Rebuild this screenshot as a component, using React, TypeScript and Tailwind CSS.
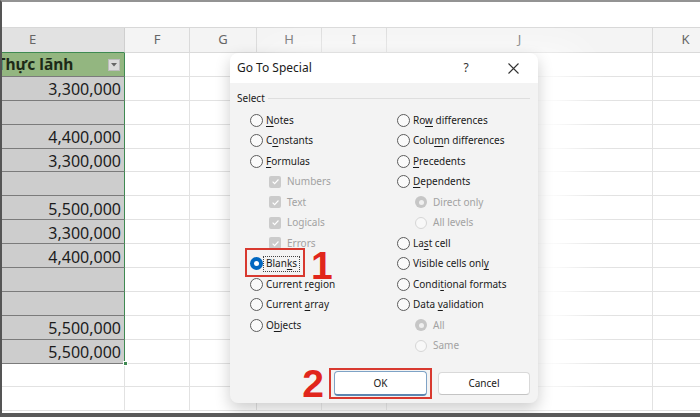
import React from "react";

const values = [
  "3,300,000",
  "",
  "4,400,000",
  "3,300,000",
  "",
  "5,500,000",
  "3,300,000",
  "4,400,000",
  "",
  "",
  "5,500,000",
  "5,500,000",
];

// widths of F..K
const restWidthClass = ["w-[65px]", "w-[67px]", "w-[65px]", "w-[65px]", "w-[266px]", "w-[66px]"];
const letters = ["F", "G", "H", "I", "J", "K"];

type Kind = "radio" | "checked" | "check" | "sub" | "subChecked";
type Item = { kind: Kind; label: string; u?: number; mark?: boolean };

const leftItems: Item[] = [
  { kind: "radio", label: "Notes", u: 0 },
  { kind: "radio", label: "Constants", u: 1 },
  { kind: "radio", label: "Formulas", u: 0 },
  { kind: "check", label: "Numbers" },
  { kind: "check", label: "Text" },
  { kind: "check", label: "Logicals" },
  { kind: "check", label: "Errors" },
  { kind: "checked", label: "Blanks", u: 4, mark: true },
  { kind: "radio", label: "Current region", u: 8 },
  { kind: "radio", label: "Current array", u: 8 },
  { kind: "radio", label: "Objects", u: 1 },
];

const rightItems: Item[] = [
  { kind: "radio", label: "Row differences", u: 2 },
  { kind: "radio", label: "Column differences", u: 4 },
  { kind: "radio", label: "Precedents", u: 0 },
  { kind: "radio", label: "Dependents", u: 0 },
  { kind: "subChecked", label: "Direct only" },
  { kind: "sub", label: "All levels" },
  { kind: "radio", label: "Last cell", u: 2 },
  { kind: "radio", label: "Visible cells only", u: 17 },
  { kind: "radio", label: "Conditional formats", u: 5 },
  { kind: "radio", label: "Data validation", u: 5 },
  { kind: "subChecked", label: "All" },
  { kind: "sub", label: "Same" },
];

function Label({ text, u }: { text: string; u?: number }) {
  if (u === undefined) return <>{text}</>;
  return (
    <>
      {text.slice(0, u)}
      <span className="underline underline-offset-[2px]">{text[u]}</span>
      {text.slice(u + 1)}
    </>
  );
}

function Mark({ kind }: { kind: Kind }) {
  if (kind === "radio")
    return <span className="w-[13px] h-[13px] shrink-0 rounded-full border border-[#5c5c5c] bg-[#fafafa]" />;
  if (kind === "checked")
    return (
      <span className="w-[13px] h-[13px] shrink-0 rounded-full bg-[#0067c0] flex items-center justify-center">
        <span className="w-[5px] h-[5px] rounded-full bg-white" />
      </span>
    );
  if (kind === "subChecked")
    return (
      <span className="w-[12px] h-[12px] shrink-0 rounded-full bg-[#c6c6c6] flex items-center justify-center">
        <span className="w-[5px] h-[5px] rounded-full bg-[#efefef]" />
      </span>
    );
  if (kind === "sub")
    return <span className="w-[12px] h-[12px] shrink-0 rounded-full border border-[#d6d6d6] bg-[#f8f8f8]" />;
  return (
    <span className="w-[12px] h-[12px] shrink-0 rounded-[2px] bg-[#cbcbcb] flex items-center justify-center">
      <svg width="9" height="9" viewBox="0 0 10 10">
        <path d="M1.8 5.2 L4 7.3 L8.3 2.8" fill="none" stroke="white" strokeWidth="1.3" />
      </svg>
    </span>
  );
}

function Option({ item }: { item: Item }) {
  const disabled = item.kind === "check" || item.kind === "sub" || item.kind === "subChecked";
  const indent = item.kind === "check" ? "pl-[19px]" : item.kind === "sub" || item.kind === "subChecked" ? "pl-[18px]" : "";
  const gap = disabled ? "ml-[6px]" : "ml-[3px]";
  return (
    <div className={`relative h-[20.5px] flex items-center ${indent}`}>
      <Mark kind={item.kind} />
      {item.mark ? (
        <span className="h-[16px] flex items-center border border-dotted border-[#444] px-[2px] text-[#1a1a1a]">
          <Label text={item.label} u={item.u} />
        </span>
      ) : (
        <span className={`${gap} whitespace-nowrap ${disabled ? "text-[#a2a2a2]" : "text-[#1a1a1a]"}`}>
          <Label text={item.label} u={item.u} />
        </span>
      )}
      {item.mark && (
        <>
          <span className="absolute left-[-5px] top-[-5px] w-[60px] h-[29px] border-2 border-[#d8392f]" />
          <span className="absolute left-[61px] top-[-7px] text-[39px] leading-none font-bold text-[#e1261c] font-['Liberation_Sans',Arial,sans-serif]">
            1
          </span>
        </>
      )}
    </div>
  );
}

function Dialog() {
  return (
    <div className="absolute left-[228px] top-[51px] w-[308px] h-[350px] rounded-[8px] bg-[#f3f3f3] flex flex-col overflow-hidden shadow-[0_6px_16px_rgba(0,0,0,0.2),40px_0_40px_0_rgba(255,255,255,0.9)] text-[10px]">
      <div className="h-[30px] bg-white flex items-center pl-[7px] pr-[15px] shrink-0">
        <span className="flex-1 text-[12px] text-[#1a1a1a]">Go To Special</span>
        <span className="w-[20px] text-center text-[12px] text-[#333]">?</span>
        <span className="ml-[27px] w-[20px] flex justify-center">
          <svg width="11" height="11" viewBox="0 0 11 11">
            <path d="M0.5 0.5 L10.5 10.5 M10.5 0.5 L0.5 10.5" stroke="#333" strokeWidth="1.1" />
          </svg>
        </span>
      </div>
      <div className="flex-1 flex flex-col">
        <div className="mt-[5px] h-[20px] flex items-center pl-[7px] pr-[8px]">
          <span className="text-[#1a1a1a]">Select</span>
          <div className="ml-[3px] flex-1 h-px bg-[#dedede]" />
        </div>
        <div className="flex mt-[1.75px]">
          <div className="w-[167px] pl-[20px] flex flex-col">
            {leftItems.map((it) => (
              <Option key={it.label} item={it} />
            ))}
          </div>
          <div className="flex flex-col">
            {rightItems.map((it) => (
              <Option key={it.label + "r"} item={it} />
            ))}
          </div>
        </div>
        <div className="mt-auto h-[31px] mb-[4px] flex items-center justify-end pr-[8px]">
          <span className="mr-[5px] h-[31px] text-[39px] leading-[31px] font-bold text-[#e1261c] font-['Liberation_Sans',Arial,sans-serif]">
            2
          </span>
          <div className="border-2 border-[#d8392f] px-[3px] py-[1px]">
            <div className="w-[93px] h-[25px] bg-white border border-[#7fa3c6] border-b-2 border-b-[#5c86b0] rounded-[4px] flex items-center justify-center text-[#1a1a1a]">
              OK
            </div>
          </div>
          <div className="ml-[6px] w-[92px] h-[23px] bg-white border border-[#d9d9d9] border-b-[#c4c4c4] rounded-[4px] flex items-center justify-center text-[#1a1a1a]">
            Cancel
          </div>
        </div>
      </div>
    </div>
  );
}

function WhiteCells() {
  return (
    <>
      {restWidthClass.map((w, i) => (
        <div key={i} className={`${w} shrink-0 border-r border-b border-[#e2e2e2]`} />
      ))}
    </>
  );
}

export default function App() {
  return (
    <div className="relative w-[700px] h-[417px] overflow-hidden bg-white border-l-2 border-l-[#555] border-t-2 border-t-[#939393] border-b-4 border-b-[#5a5a5a] font-['Noto_Sans',sans-serif]">
      {/* ribbon / formula area */}
      <div className="h-[25px]" />

      {/* column headers */}
      <div className="flex h-[26px] bg-[#f4f4f4] border-t border-[#d8d8d8]">
        <div className="-ml-[61px] w-[184px] shrink-0 bg-[#e2e2e2] border-r border-[#cfcfcf] border-b border-b-[#3f8a52] flex items-center justify-center text-[13px] text-[#666]">
          E
        </div>
        {letters.map((l, i) => (
          <div
            key={l}
            className={`${restWidthClass[i]} shrink-0 border-r border-b border-[#dadada] flex items-center justify-center text-[13px] text-[#666]`}
          >
            {l}
          </div>
        ))}
      </div>

      {/* header of the table */}
      <div className="flex h-[23.9px]">
        <div className="relative -ml-[61px] w-[184px] shrink-0 bg-[#93b680] border-b border-b-[#7b7b7b] border-r-[1.5px] border-r-[#3f8a52] flex items-center justify-center pl-[5px] pt-[1px] text-[15.5px] font-bold text-[#1d2a17]">
          Thực lãnh
          <span className="absolute right-[4px] top-[6px] w-[12px] h-[12px] bg-[#dcdcdc] border border-[#bcbcbc] flex items-center justify-center">
            <svg width="6" height="4" viewBox="0 0 6 4">
              <path d="M0 0 L6 0 L3 3.5 Z" fill="#666" />
            </svg>
          </span>
        </div>
        <WhiteCells />
      </div>

      {values.map((v, r) => (
        <div key={r} className="flex h-[23.9px]">
          <div className="relative -ml-[61px] w-[184px] shrink-0 bg-[#cdcdcd] border-b border-b-[#7b7b7b] border-r-[1.5px] border-r-[#3f8a52] flex items-center justify-end pr-[3px] pt-[2px] text-[16px] text-[#1c1c1c]">
            {v}
            {r === values.length - 1 && (
              <span className="absolute -right-[4px] -bottom-[3px] w-[5px] h-[5px] bg-[#3f8a52] border border-white" />
            )}
          </div>
          <WhiteCells />
        </div>
      ))}

      {[0, 1].map((r) => (
        <div key={"w" + r} className="flex h-[23.9px]">
          <div className="-ml-[61px] w-[184px] shrink-0 border-r border-b border-[#e2e2e2]" />
          <WhiteCells />
        </div>
      ))}

      <Dialog />
    </div>
  );
}
